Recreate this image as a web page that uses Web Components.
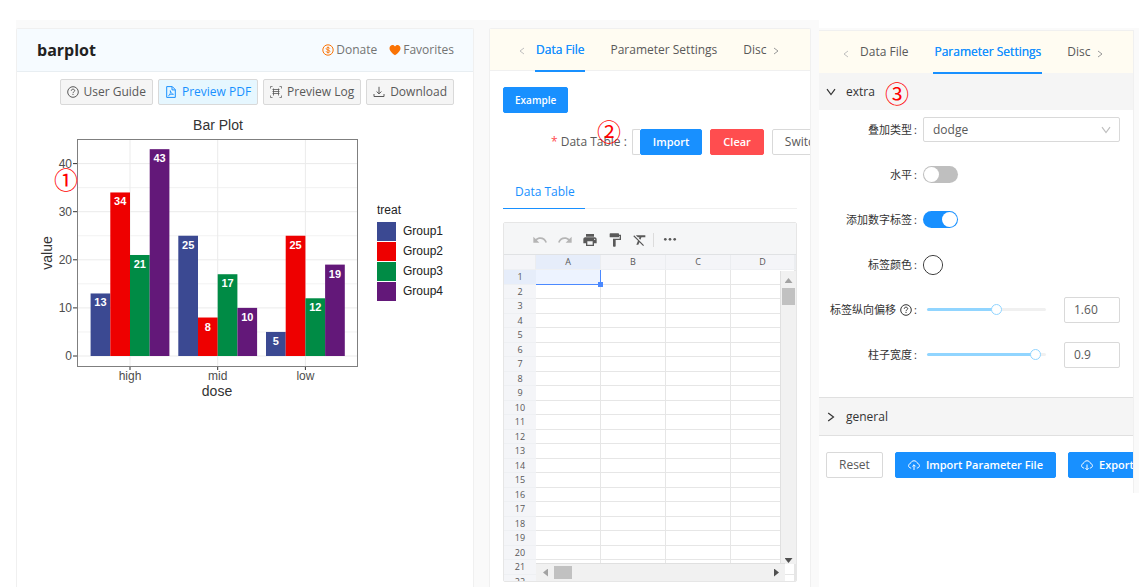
<!DOCTYPE html>
<html lang="en">
<head>
<meta charset="utf-8">
<meta name="viewport" content="width=device-width, initial-scale=1">
<title>barplot</title>
<style>
  html { background: #fff; }
  body {
    margin: 0;
    font: 12px/20px "Open Sans", "Noto Sans CJK SC", sans-serif;
    color: #595959;
  }
</style>
</head>
<body>
<plot-app></plot-app>

<script>
const ICONS = {
  dollar: '<svg viewBox="0 0 12 12"><g fill="none" stroke="currentColor"><circle cx="6" cy="6" r="5.2"/><path d="M7.8 4.6C7.6 3.9 6.900 3.500 6 3.500c-1 0-1.800.500-1.800 1.250 0 1.700 3.700.800 3.700 2.500C7.900 8.100 7 8.500 6 8.500S4.300 8 4.100 7.300M6 2.500v7" stroke-width=".9"/></g></svg>',
  heart: '<svg viewBox="0 0 12 12"><path fill="currentColor" d="M6 11.200C4.500 10.200.500 7.400.500 4.200.500 2.300 1.900 1 3.500 1 4.600 1 5.500 1.600 6 2.500 6.500 1.600 7.400 1 8.500 1c1.600 0 3 1.300 3 3.200 0 3.200-4 6-5.500 7z"/></svg>',
  help: '<svg viewBox="0 0 12 12"><g fill="none" stroke="currentColor"><circle cx="6" cy="6" r="5.300"/><path d="M4.300 4.800C4.300 3.700 5 3.200 6 3.200s1.700.600 1.700 1.500C7.700 5.700 6 5.800 6 7.200"/></g><rect x="5.500" y="8" width="1" height="1" fill="currentColor"/></svg>',
  pdf: '<svg viewBox="0 0 12 12"><g fill="none" stroke="currentColor"><path d="M1.700.600h5.600l3 3v7.800H1.700zM7 .800v3.100h3.200"/><path stroke-width=".8" d="M5.300 4.600c.600 2.200 1.300 3.400 3.200 3.700-2-.300-3.800.200-5 1.400C5 8.600 5.800 7 5.300 4.600z"/></g></svg>',
  scan: '<svg viewBox="0 0 12 12"><g fill="none" stroke="currentColor"><path d="M.500 2.500V.500h2M9.500.500h2v2M11.500 9.500v2h-2M2.500 11.500h-2v-2" opacity=".7"/><path d="M2.500 3.500h7M2.500 5.500h7M2.500 7.500h7M3.500 2.500v7M8.500 2.500v7" opacity=".8"/></g></svg>',
  download: '<svg viewBox="0 0 12 12"><path fill="none" stroke="currentColor" d="M6 .800v7M3.600 5.500 6 7.900l2.400-2.400M1 8v2.500h10V8"/></svg>',
  cloudUp: '<svg viewBox="0 0 12 12"><path fill="none" stroke="currentColor" d="M3.200 9.100C1.600 9 .600 8 .600 6.700c0-1.200.800-2 1.900-2.300C3 2.800 4.300 1.800 6 1.800s3 1 3.500 2.600c1.100.300 1.900 1.100 1.900 2.300 0 1.300-1 2.300-2.600 2.400M6 11V5.800M4.400 7.400 6 5.800l1.600 1.600"/></svg>',
  cloudDown: '<svg viewBox="0 0 12 12"><path fill="none" stroke="currentColor" d="M3.200 9.100C1.600 9 .600 8 .600 6.700c0-1.200.800-2 1.900-2.300C3 2.800 4.300 1.800 6 1.800s3 1 3.500 2.600c1.100.300 1.900 1.100 1.900 2.300 0 1.300-1 2.300-2.600 2.400M6 5.500v5.200M4.400 9.200 6 10.800l1.600-1.600"/></svg>',
  left: '<svg viewBox="0 0 12 12"><path fill="none" stroke="currentColor" d="M8 3 4 6l4 3"/></svg>',
  right: '<svg viewBox="0 0 12 12"><path fill="none" stroke="currentColor" d="M4 3l4 3-4 3"/></svg>',
  chevronDown: '<svg viewBox="0 0 12 12"><path fill="none" stroke="currentColor" stroke-width="1.200" d="M2 3.200 6 8.500l4-5.300"/></svg>',
  chevronRight: '<svg viewBox="0 0 12 12"><path fill="none" stroke="currentColor" stroke-width="1.200" d="M3.200 2 8.500 6 3.200 10"/></svg>',
  undo: '<svg viewBox="0 0 24 24"><path fill="currentColor" d="M12.5 8c-2.650 0-5.050.990-6.900 2.600L2 7v9h9l-3.620-3.620c1.390-1.160 3.160-1.880 5.120-1.880 3.540 0 6.550 2.310 7.600 5.500l2.370-.780C21.080 11.030 17.150 8 12.500 8z"/></svg>',
  redo: '<svg viewBox="0 0 24 24"><path fill="currentColor" d="M18.400 10.600C16.550 8.990 14.150 8 11.500 8c-4.650 0-8.580 3.030-9.960 7.220L3.900 16c1.050-3.190 4.050-5.500 7.600-5.500 1.950 0 3.730.720 5.120 1.880L13 16h9V7l-3.600 3.600z"/></svg>',
  print: '<svg viewBox="0 0 24 24"><path fill="currentColor" d="M19 8H5c-1.660 0-3 1.340-3 3v6h4v4h12v-4h4v-6c0-1.660-1.340-3-3-3zm-3 11H8v-5h8v5zm3-7c-.550 0-1-.450-1-1s.450-1 1-1 1 .450 1 1-.450 1-1 1zm-1-9H6v4h12V3z"/></svg>',
  paint: '<svg viewBox="0 0 24 24"><path fill="currentColor" d="M18 4V3c0-.550-.450-1-1-1H5c-.550 0-1 .450-1 1v4c0 .550.450 1 1 1h12c.550 0 1-.450 1-1V6h1v4H9v11c0 .550.450 1 1 1h2c.550 0 1-.450 1-1v-9h8V4h-3z"/></svg>',
  clear: '<svg viewBox="0 0 24 24"><path fill="currentColor" d="M3.270 5 2 6.270l6.970 6.970L6.500 19h3l1.570-3.660L16.730 21 18 19.730 3.550 5.270 3.270 5zM6 5v.180L8.820 8h2.400l-.720 1.680 2.100 2.100L14.210 8H20V5H6z"/></svg>',
  more: '<svg viewBox="0 0 24 24"><g fill="currentColor"><circle cx="5" cy="11" r="2"/><circle cx="12" cy="11" r="2"/><circle cx="19" cy="11" r="2"/></g></svg>'
};

const BASE = `
  *, *::before, *::after { box-sizing: border-box; }
  button, input, select { font: inherit; color: inherit; margin: 0; }
  button { cursor: pointer; }
  svg { display: block; }
`;

class Part extends HTMLElement {
  connectedCallback() {
    if (this.shadowRoot) return;
    this.attachShadow({ mode: "open" }).innerHTML = `<style>${BASE}${this.css()}</style>${this.html()}`;
  }
  attr(name, fallback = "") { return this.getAttribute(name) ?? fallback; }
}

/* A push button with an optional icon. kind: plain | tool | soft | primary | danger */
customElements.define("ui-button", class extends Part {
  css() { return `
    :host { display: block; flex: none; }
    button { display: flex; align-items: center; gap: 6px; height: 26px; padding: 0 12px; border: 1px solid #d9d9d9;
      border-radius: 2px; background: #fff; white-space: nowrap; line-height: 20px; }
    .tool, .soft { padding: 0 6px; gap: 5px; background: #f5f5f5; }
    .soft { background: #e6f7ff; color: #1890ff; }
    .primary, .danger { background: #1890ff; border-color: #1890ff; color: #fff; font-size: 11px; font-weight: 600; }
    .danger { background: #ff4d4f; border-color: #ff4d4f; }
    .small { font-size: 10px; padding: 0 11px; }
    svg { width: 12px; height: 12px; }`; }
  html() {
    const icon = ICONS[this.attr("icon")] || "";
    return `<button type="button" class="${this.attr("kind", "plain")} ${this.attr("size")}">${icon}<span><slot></slot></span></button>`;
  }
});

/* A numbered callout */
customElements.define("note-mark", class extends Part {
  css() { return `:host { display: block; color: #f00; font: 24px/24px "Noto Sans CJK SC", sans-serif; }`; }
  html() { return `<slot></slot>`; }
});

customElements.define("tab-strip", class extends Part {
  css() { return `
    :host { display: flex; height: 43px; background: #fffcf2; border-bottom: 1px solid #f0f0f0; }
    .step { flex: none; display: grid; place-items: center; width: 26px; padding: 3px 0 0; border: 0; background: none; color: #999; }
    .step.prev { color: #bfbfbf; }
    .step.next { width: 18px; }
    svg { width: 12px; height: 12px; }
    nav { display: flex; gap: 24px; }
    a { padding: 11px 1px 0; color: inherit; text-decoration: none; white-space: nowrap; line-height: 20px; height: 43px; }
    a[aria-current] { color: #1890ff; text-shadow: 0 0 .25px currentColor; border-bottom: 2px solid #1890ff; }`; }
  html() {
    const current = this.attr("current");
    const tabs = ["Data File", "Parameter Settings", "Disc"].map(t =>
      `<a href="#"${t === current ? ' aria-current="page"' : ""}>${t}</a>`).join("");
    return `<button class="step prev" type="button" aria-label="Previous tabs">${ICONS.left}</button>
      <nav>${tabs}</nav>
      <button class="step next" type="button" aria-label="Next tabs">${ICONS.right}</button>`;
  }
});

customElements.define("bar-chart", class extends Part {
  css() { return `
    :host { display: block; }
    svg { width: 100%; height: auto; font-family: "Liberation Sans", Arial, sans-serif; }
    .tick { font-size: 12px; fill: #4d4d4d; }
    .title { font-size: 14px; fill: #333; }
    .key { font-size: 12px; fill: #222; }
    .num { font-size: 11px; font-weight: bold; fill: #fff; text-anchor: middle; }
    .mid { text-anchor: middle; }
    .end { text-anchor: end; }
    .mark { font: 24px "Noto Sans CJK SC", sans-serif; fill: #f00; text-anchor: middle; }`; }
  html() {
    const colors = ["#3b4992", "#ee0000", "#008b45", "#631879"];
    const data = { high: [13, 34, 21, 43], mid: [25, 8, 17, 10], low: [5, 25, 12, 19] };
    const zero = 246, unit = 4.81, left = 60, top = 29, width = 280, height = 227, bar = 19.7;
    const y = v => zero - v * unit;
    let out = "";
    for (const v of [5, 15, 25, 35]) out += `<path d="M${left} ${y(v)}h${width}" stroke="#f2f2f2"/>`;
    for (const v of [0, 10, 20, 30, 40]) out += `<path d="M${left} ${y(v)}h${width}" stroke="#ebebeb"/>
      <path d="M${left - 4} ${y(v)}h4" stroke="#333"/><text class="tick end" x="${left - 5}" y="${y(v) + 4}">${v}</text>`;
    Object.entries(data).forEach(([name, values], i) => {
      const cx = 113 + i * 87.7;
      out += `<path d="M${cx} ${top}v${height}" stroke="#ebebeb"/><path d="M${cx} ${top + height}v4" stroke="#333"/>
        <text class="tick mid" x="${cx}" y="270">${name}</text>`;
      values.forEach((v, j) => {
        const x = cx + (j - 2) * bar;
        out += `<rect x="${x}" y="${y(v)}" width="${bar}" height="${v * unit}" fill="${colors[j]}"/>
          <text class="num" x="${x + bar / 2}" y="${y(v) + 13}">${v}</text>`;
      });
    });
    colors.forEach((c, i) => {
      out += `<rect x="360" y="${112 + i * 20}" width="19" height="19" fill="${c}"/>
        <text class="key" x="386" y="${125 + i * 20}">Group${i + 1}</text>`;
    });
    return `<svg viewBox="0 0 456 300" role="img" aria-label="Bar Plot">
      <text class="title mid" x="201" y="20">Bar Plot</text>${out}
      <rect x="${left + .5}" y="${top + .5}" width="${width}" height="${height}" fill="none" stroke="#7f7f7f"/>
      <text class="title mid" x="200" y="286">dose</text>
      <text class="title mid" transform="translate(35 143) rotate(-90)">value</text>
      <text class="key" x="360" y="104">treat</text>
      <text class="mark" x="49" y="79">①</text></svg>`;
  }
});

customElements.define("plot-card", class extends Part {
  css() { return `
    :host { display: block; background: #fff; border: 1px solid #f0f0f0; border-bottom: 0; border-radius: 2px 2px 0 0; min-width: 0; }
    header { display: flex; align-items: center; height: 43px; padding: 0 19px 0 20px; background: #f6fbff; border-bottom: 1px solid #e8eef2; }
    h1 { flex: 1; margin: 0; font-size: 16px; line-height: 24px; font-weight: 700; color: #222; }
    header a { display: flex; align-items: center; gap: 2px; margin-left: 12px; color: #737373; text-decoration: none; }
    header svg { width: 12px; height: 12px; color: #fa7305; }
    .tools { display: flex; justify-content: flex-end; gap: 5px; padding: 7px 19px 0 0; }
    bar-chart { margin-top: 5px; }`; }
  html() { return `
    <header><h1>barplot</h1>
      <a href="#">${ICONS.dollar}Donate</a><a href="#">${ICONS.heart}Favorites</a></header>
    <div class="tools">
      <ui-button kind="tool" icon="help">User Guide</ui-button>
      <ui-button kind="soft" icon="pdf">Preview PDF</ui-button>
      <ui-button kind="tool" icon="scan">Preview Log</ui-button>
      <ui-button kind="tool" icon="download">Download</ui-button>
    </div>
    <bar-chart></bar-chart>`; }
});

customElements.define("data-sheet", class extends Part {
  css() { return `
    :host { display: block; border: 1px solid #e6e6e6; border-radius: 2px; overflow: hidden; }
    .bar { display: flex; align-items: center; height: 32px; padding: 2px 0 0 23px; background: #f5f6f7; border-bottom: 1px solid #e0e2e4; }
    .bar button { display: grid; place-items: center; width: 25px; height: 24px; padding: 0; border: 0; background: none; color: #595959; }
    .bar button:disabled { color: #b5b5b5; }
    .bar svg { width: 16px; height: 16px; }
    .bar i { width: 1px; height: 14px; margin: 0 3px 0 1px; background: #dcdcdc; }
    .view { position: relative; height: 326px; overflow: hidden; }
    table { width: 100%; table-layout: fixed; border-collapse: separate; border-spacing: 0; font-size: 9px; line-height: 12px; }
    th { padding: 0; font-weight: 400; background: #f4f5f8; color: #585757; border-bottom: 1px solid #eef0f3; }
    td { padding: 0; border: 0 solid #e6e6e6; border-width: 0 1px 1px 0; }
    tr { height: 15px; }
    tbody tr:nth-child(even) { height: 14px; }
    thead th { border-right: 1px solid #ebedf0; }
    .on { background: #e6edfa; }
    .cell { position: relative; background: #edf3ff; border-color: #4b89ff; }
    .cell::after { content: ""; position: absolute; right: -3px; bottom: -3px; width: 5px; height: 5px; background: #4b89ff; }
    .vertical, .horizontal { position: absolute; display: flex; align-items: center; justify-content: space-between; background: #f1f1f1; }
    .vertical { right: 0; top: 16px; bottom: 17px; width: 16px; flex-direction: column; border-left: 1px solid #e0e0e0; padding: 7px 0 1px; }
    .horizontal { left: 32px; right: 11px; bottom: 0; height: 18px; border-top: 1px solid #e0e0e0; padding: 0 6px 0 7px; }
    .thumb { background: #c1c1c1; }
    .vertical .thumb { width: 13px; height: 17px; margin: 5px 0 auto; }
    .horizontal .thumb { width: 18px; height: 13px; margin: 0 auto 0 6px; }
    .tri { width: 8px; height: 5px; background: #505050; clip-path: polygon(0 0, 100% 0, 50% 100%); }
    .tri.up { background: #a3a3a3; clip-path: polygon(50% 0, 100% 100%, 0 100%); }
    .tri.lf { width: 5px; height: 8px; background: #a3a3a3; clip-path: polygon(100% 0, 100% 100%, 0 50%); }
    .tri.rt { width: 5px; height: 8px; clip-path: polygon(0 0, 100% 50%, 0 100%); }`; }
  html() {
    const tool = (icon, label, off) => `<button type="button" aria-label="${label}"${off ? " disabled" : ""}>${ICONS[icon]}</button>`;
    const cols = ["A", "B", "C", "D"];
    const rows = Array.from({ length: 22 }, (_, r) => `<tr><th scope="row"${r ? "" : ' class="on"'}>${r + 1}</th>${
      [...cols, ""].map((c, i) => `<td${r + i ? "" : ' class="cell"'}></td>`).join("")}</tr>`).join("");
    return `<div class="bar">${tool("undo", "Undo", 1)}${tool("redo", "Redo", 1)}${tool("print", "Print")}${tool("paint", "Paint format")}${tool("clear", "Clear format")}<i></i>${tool("more", "More")}</div>
      <div class="view"><table>
        <colgroup><col style="width:32px"><col style="width:65px"><col style="width:65px"><col style="width:65px"><col style="width:64px"><col></colgroup>
        <thead><tr><th></th>${cols.map((c, i) => `<th scope="col"${i ? "" : ' class="on"'}>${c}</th>`).join("")}<th></th></tr></thead>
        <tbody>${rows}</tbody></table>
        <div class="vertical"><span class="tri up"></span><span class="thumb"></span><span class="tri"></span></div>
        <div class="horizontal"><span class="tri lf"></span><span class="thumb"></span><span class="tri rt"></span></div>
      </div>`;
  }
});

customElements.define("data-card", class extends Part {
  css() { return `
    :host { display: block; background: #fff; border: 1px solid #f0f0f0; border-bottom: 0; border-radius: 2px 2px 0 0; min-width: 0; overflow: hidden; }
    tab-strip { padding-left: 19px; height: 42px; }
    .body { padding: 16px 13px 6px; }
    .row { position: relative; display: flex; align-items: center; padding-left: 48px; margin: 16px 0 20px; }
    .row label { flex: none; white-space: pre; margin-right: 5px; }
    label b { color: #ff4d4f; font-weight: 400; }
    input { flex: none; width: 8px; height: 26px; padding: 0; border: 1px solid #d9d9d9; border-right: 0; border-radius: 2px 0 0 2px; }
    .row ui-button + ui-button { margin-left: 8px; }
    note-mark { position: absolute; left: 94px; top: -10px; }
    .tabs { display: flex; height: 34px; border-bottom: 1px solid #f0f0f0; margin-bottom: 13px; }
    .tabs a { height: 34px; padding: 7px 10px 0 12px; color: #1890ff; text-decoration: none; border-bottom: 1px solid #1890ff; }
    .first { display: flex; }`; }
  html() { return `
    <tab-strip current="Data File"></tab-strip>
    <div class="body">
      <div class="first"><ui-button kind="primary" size="small">Example</ui-button></div>
      <div class="row"><label for="t"><b>*</b> Data Table :</label><input id="t" type="text">
        <ui-button kind="primary">Import</ui-button><ui-button kind="danger">Clear</ui-button><ui-button>Switch</ui-button>
        <note-mark>②</note-mark></div>
      <div class="tabs"><a href="#">Data Table</a></div>
      <data-sheet></data-sheet>
    </div>`; }
});

/* Shared frame of the labelled form controls */
class Field extends Part {
  css() { return `
    :host { display: flex; align-items: center; height: 25px; }
    label { flex: none; width: 98px; margin-right: 6px; display: flex; justify-content: flex-end; align-items: center; white-space: nowrap; color: #333; font-size: 11px; }
    label svg { width: 12px; height: 12px; margin-left: 4px; }
    label::after { content: ":"; margin-left: 2px; }
    input, select { appearance: none; outline: none; }
    ${this.own()}`; }
  html() { return `<label for="f">${this.attr("label")}${this.hasAttribute("help") ? ICONS.help : ""}</label>${this.control()}`; }
}

customElements.define("select-field", class extends Field {
  own() { return `
    .box { position: relative; flex: 1; }
    select { width: 100%; height: 25px; padding: 0 9px; border: 1px solid #d9d9d9; border-radius: 2px; background: #fff; color: #595959; display: block; }
    .box svg { position: absolute; right: 8px; top: 7px; width: 12px; height: 12px; color: #bfbfbf; pointer-events: none; }`; }
  control() { return `<div class="box"><select id="f"><option>${this.attr("value")}</option></select>${ICONS.chevronDown}</div>`; }
});

customElements.define("switch-field", class extends Field {
  own() { return `
    input { width: 35px; height: 17px; padding: 1px; border-radius: 9px; background: #bfbfbf; display: flex; }
    input::before { content: ""; width: 15px; height: 15px; border-radius: 50%; background: #fff; }
    input:checked { background: #1890ff; justify-content: flex-end; }`; }
  control() { return `<input id="f" type="checkbox" role="switch"${this.hasAttribute("on") ? " checked" : ""}>`; }
});

customElements.define("color-field", class extends Field {
  own() { return `
    input { width: 20px; height: 20px; padding: 0; border: 1px solid #333; border-radius: 50%; background: #fff; overflow: hidden; }
    input::-webkit-color-swatch-wrapper { padding: 0; }
    input::-webkit-color-swatch { border: 0; border-radius: 50%; }`; }
  control() { return `<input id="f" type="color" value="#ffffff">`; }
});

customElements.define("slider-field", class extends Field {
  own() { return `
    .range { flex: 1; width: 0; min-width: 0; height: 12px; margin: 0 18px 0 4px; background: none; }
    .range::-webkit-slider-runnable-track { height: 3px; border-radius: 2px;
      background: linear-gradient(90deg, #91d5ff var(--fill), #f0f0f0 var(--fill)); }
    .range::-webkit-slider-thumb { appearance: none; width: 11px; height: 11px; margin-top: -4px; border: 1px solid #91d5ff; border-radius: 50%; background: #fff; }
    .num { flex: none; width: 56px; height: 26px; padding: 0 9px; border: 1px solid #d9d9d9; border-radius: 2px; color: #595959; }`; }
  control() {
    const p = this.attr("percent");
    return `<input class="range" id="f" type="range" min="0" max="100" value="${p}" style="--fill:${p}%">
      <input class="num" type="text" aria-label="${this.attr("label")}" value="${this.attr("value")}">`;
  }
});

/* A foldable section title */
customElements.define("fold-head", class extends Part {
  css() { return `
    :host { display: flex; align-items: center; height: 37px; background: #f5f5f5; }
    button { display: flex; align-items: center; gap: 9px; padding: 0 0 0 6px; border: 0; background: none; color: #333; }
    svg { width: 12px; height: 12px; }`; }
  html() {
    const open = this.hasAttribute("open");
    return `<button type="button" aria-expanded="${open}">${open ? ICONS.chevronDown : ICONS.chevronRight}${this.attr("name")}</button><slot></slot>`;
  }
});

customElements.define("param-card", class extends Part {
  css() { return `
    :host { display: block; background: #fafafa; padding: 2px 5px 0 0; min-width: 0; }
    section { background: #fff; border: 1px solid #f0f0f0; border-left: 0; border-bottom: 0; overflow: hidden; }
    tab-strip { padding-left: 14px; height: 42px; border-bottom: 0; }
    note-mark { margin: 2px 0 0 10px; }
    form { display: grid; grid-template-columns: minmax(0, 1fr); gap: 20px; padding: 7px 13px 30px 0; }
    .general { height: 39px; border: solid #e0e0e0; border-width: 1px 0; }
    .actions { display: flex; gap: 12px; padding: 16px 0 15px 7px; }`; }
  html() { return `<section>
    <tab-strip current="Parameter Settings"></tab-strip>
    <fold-head open name="extra"><note-mark>③</note-mark></fold-head>
    <form>
      <select-field label="叠加类型" value="dodge"></select-field>
      <switch-field label="水平"></switch-field>
      <switch-field label="添加数字标签" on></switch-field>
      <color-field label="标签颜色"></color-field>
      <slider-field label="标签纵向偏移" help percent="59" value="1.60"></slider-field>
      <slider-field label="柱子宽度" percent="95" value="0.9"></slider-field>
    </form>
    <fold-head class="general" name="general"></fold-head>
    <div class="actions">
      <ui-button>Reset</ui-button>
      <ui-button kind="primary" icon="cloudUp">Import Parameter File</ui-button>
      <ui-button kind="primary" icon="cloudDown">Export</ui-button>
    </div></section>`; }
});

customElements.define("plot-app", class extends Part {
  css() { return `
    :host { display: grid; grid-template-columns: minmax(0, 803fr) minmax(0, 320fr); align-items: start;
      padding: 20px 0 0 16px; min-height: 100vh; box-sizing: border-box; }
    main { display: grid; grid-template-columns: minmax(0, 458fr) minmax(0, 322fr); gap: 15px; align-self: stretch;
      padding: 8px 8px 0 0; background: #fafafa; }
    param-card { margin-top: 8px; }`; }
  html() { return `<main><plot-card></plot-card><data-card></data-card></main><param-card></param-card>`; }
});
</script>
</body>
</html>
